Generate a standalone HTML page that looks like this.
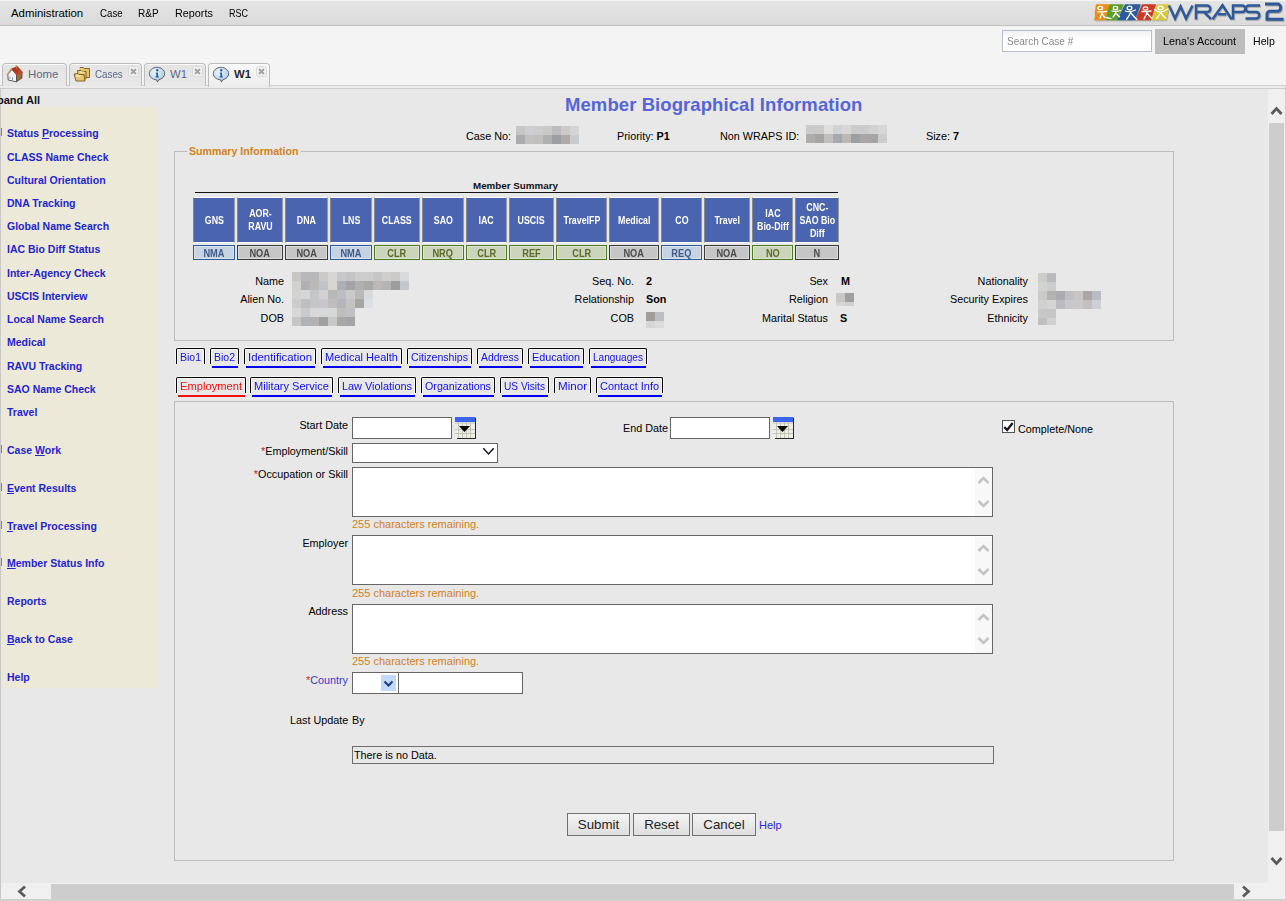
<!DOCTYPE html>
<html><head><meta charset="utf-8">
<style>
*{box-sizing:border-box}
html,body{margin:0;padding:0}
body{width:1286px;height:901px;overflow:hidden;position:relative;background:#f4f4f4;font-family:"Liberation Sans",sans-serif;font-size:11px;color:#1a1a1a}
.a{position:absolute;white-space:nowrap}
#menubar{left:0;top:0;width:1286px;height:26px;border-top:1px solid #f4f4f4;border-bottom:1px solid #bebebe;background:linear-gradient(#e4e4e4,#dbdbdb)}
.mi{top:7px;font-size:11.4px;color:#000}
.btab{top:63px;height:23px;border:1px solid #bdbdbd;box-shadow:inset 0 1px 0 #fff;border-bottom:none;border-radius:4px 4px 0 0;background:linear-gradient(#e4e4e4,#e8e8e8)}
.btab .t{position:absolute;top:4px;font-size:11.4px;color:#5b6886}
.cls{position:absolute;top:3px;width:11px;height:10px;border:1px solid #dcdcdc;border-radius:2px;background:#f4f4f4}
.lnk{font-size:10.5px;font-weight:bold;color:#2424d0;left:7px}
.lbl{font-size:10.8px;color:#000;text-align:right}
.val{font-size:10.8px;font-weight:bold;color:#000}
.hc{position:absolute;top:197px;height:46px;border-top:1px solid #fff;border-bottom:1px solid #fff;border-left:1px solid #8a8a8a;border-right:1px solid #9a9a9a;background:#4b64b0;color:#fff;font-weight:bold;font-size:10.5px;display:flex;align-items:center;justify-content:center;text-align:center;line-height:13px}
.sc{position:absolute;top:245px;height:15px;font-weight:bold;font-size:10.5px;text-align:center;line-height:12px}
.sb{background:#c5d3e3;border:1px solid #2e5c9a;color:#3e5a88;box-shadow:inset 0 0 0 1px #dbe3ee}
.sg{background:#c6c6c6;border:1px solid #3a3a3a;color:#4a4a4a;box-shadow:inset 0 0 0 1px #dcdcdc}
.sn{background:#cbd5bb;border:1px solid #4e7a1e;color:#5b6c2a;box-shadow:inset 0 0 0 1px #dee4d2}
.mz{position:absolute}
.mz i{position:absolute;width:9px;height:9px}
.tb{position:absolute;white-space:nowrap;height:16px;border:1px solid #000;border-bottom:none;border-radius:2px 2px 0 0;font-size:11px;color:#1010f0;box-shadow:inset 1px 1px 0 #f8f8f8,inset -1px 0 0 #f8f8f8,0 -1px 0 #f6f6f6,-1px 0 0 #f6f6f6,1px 0 0 #f6f6f6}
.tb span{position:absolute;left:3px;top:1.5px;transform-origin:0 0;display:inline-block;line-height:12px}
.ul{position:absolute;height:2px;background:#0000ee}
.inp{position:absolute;background:#fff;border:1px solid #666}
.orange{color:#d4801e;font-size:11px}
.btn{position:absolute;top:813px;height:23px;border:1px solid #707070;background:linear-gradient(#f4f4f4,#dedede);font-size:13.3px;color:#222;text-align:center;line-height:21px}
.hc span{display:inline-block;transform:scaleX(0.84)}
.sc span{display:inline-block;transform:scaleX(0.88);position:relative;top:0.5px}
</style></head><body>

<!-- menu bar -->
<div id="menubar" class="a"></div>
<div class="a mi" style="left:11px">Administration</div>
<div class="a mi" style="left:100px;transform:scaleX(0.85);transform-origin:0 0">Case</div>
<div class="a mi" style="left:138px;transform:scaleX(0.88);transform-origin:0 0">R&amp;P</div>
<div class="a mi" style="left:175px;transform:scaleX(0.95);transform-origin:0 0">Reports</div>
<div class="a mi" style="left:229px;transform:scaleX(0.79);transform-origin:0 0">RSC</div>

<!-- logo -->
<svg class="a" style="left:1092px;top:0" width="194" height="24" viewBox="0 0 194 24">
 <defs><filter id="sh" x="-5%" y="-10%" width="115%" height="140%"><feDropShadow dx="0.8" dy="0.9" stdDeviation="0.5" flood-color="#000" flood-opacity="0.3"/></filter></defs>
 <g filter="url(#sh)">
 <path d="M4 4.3 L17.5 4.3 Q19 8 16 11 L12.4 20.2 L2.2 20.2 Q3.5 16 2.8 12 Z" fill="#ea8f14"/>
 <path d="M17.7 4.3 L31.7 4.3 L25 20.2 L13 20.2 Z" fill="#5b9e26"/>
 <path d="M33 4.3 L48.8 4.3 L43 20.2 L25 20.2 Z" fill="#2b5b9c"/>
 <path d="M50 4.3 L64 4.3 L59 20.2 L43 20.2 Z" fill="#cc3b26"/>
 <path d="M65 4.3 L77.5 4.3 L74 20.2 L59 20.2 Z" fill="#d8c83c"/>
 </g>
 <g stroke="#fff" stroke-width="1.3" fill="none" stroke-linecap="round">
  <ellipse cx="8.3" cy="8" rx="2.3" ry="1.7"/><path d="M5.5 11.8 Q10 12 14.5 11.3 M10 12 Q9.5 15 8 18.2 M10 13.5 Q12 16 12.5 17.5"/>
  <ellipse cx="23.5" cy="8" rx="2.2" ry="1.7"/><path d="M20 10.8 Q24 12 28.5 10.5 M24 11.8 Q23 15 21 17 M24 13.5 Q26 15.5 27.5 16.8 M14 17.5 L19 18.7"/>
  <ellipse cx="37.5" cy="8" rx="2.4" ry="1.8"/><path d="M33.5 11 Q37 12.8 43.5 10 M39 12 Q37 16 34.5 19.5 M39.5 13.5 Q42 17 45 19.5"/>
  <ellipse cx="53.5" cy="8.5" rx="2.2" ry="1.6"/><path d="M50 11.5 Q54 12 59 11 M55 12 Q54 15.5 52 19 M55 13 Q57.5 16 60 18.5"/>
  <ellipse cx="68.5" cy="8" rx="2.5" ry="1.8"/><path d="M62.5 9.5 Q66 12 68 12 Q71 12 76 9 M68.5 12 Q68 15 64.5 18.5 M68.5 12.5 Q71 16 73.5 18"/>
 </g>
 <g stroke="#2f5896" stroke-width="2.5" fill="none" filter="url(#sh)">
  <path d="M77 5.5 L83 18.5 L88.5 6.5 L94 18.5 L100.5 5.5"/>
  <path d="M104 19.6 V5.5 H115 A3.3 3.3 0 0 1 115 12.1 H104 M112 12.1 L119 19"/>
  <path d="M120.5 19.2 L130.5 5.3 L139.5 19.2 M126 14.3 H134"/>
  <path d="M141 19.6 V5.5 H150 A3.3 3.3 0 0 1 150 12.1 H141"/>
  <path d="M168 5.5 H157 A3.2 3.2 0 0 0 157 12 H164.5 A3.3 3.3 0 0 1 164.5 18.5 H153.5"/>
  <path d="M173 4 H186.5 A4.2 4.2 0 0 1 186.5 11.3 H178 A3 3 0 0 0 175 14.3 V19.2 H191.5" stroke-width="3"/>
 </g>
</svg>

<!-- search / account -->
<div class="a" style="left:1002px;top:30px;width:150px;height:22px;background:linear-gradient(#f2f2f2,#fff 40%);border:1px solid #b8bcd0"></div>
<div class="a" style="left:1007px;top:35px;font-size:11px;color:#8a8a8a;transform:scaleX(0.91);transform-origin:0 0">Search Case #</div>
<div class="a" style="left:1155px;top:29px;width:90px;height:25px;background:#bdbdbd"></div>
<div class="a" style="left:1163px;top:35px;font-size:11.4px;color:#000;transform:scaleX(0.95);transform-origin:0 0">Lena's Account</div>
<div class="a" style="left:1253px;top:35px;font-size:11.4px;color:#000;transform:scaleX(0.93);transform-origin:0 0">Help</div>

<!-- browser tabs -->
<div class="a" style="left:0;top:85px;width:1286px;height:1px;background:#d0d0d0"></div>
<div class="a" style="left:0;top:86px;width:1286px;height:2px;background:#ececec"></div>
<div class="a btab" style="left:2px;width:65px"><span class="t" style="left:25px">Home</span></div>
<div class="a btab" style="left:69px;width:73px"><span class="t" style="left:25px;transform:scaleX(0.86);transform-origin:0 0">Cases</span></div>
<div class="a btab" style="left:144px;width:62px"><span class="t" style="left:25px">W1</span></div>
<div class="a btab" style="left:208px;width:62px;height:24px;background:linear-gradient(#fbfbfb,#ececec)"><span class="t" style="left:25px;font-weight:bold;color:#2a2a2a">W1</span></div>
<!-- tab icons -->
<svg class="a" style="left:6px;top:65px" width="18" height="18" viewBox="0 0 18 18">
 <defs><linearGradient id="rf" x1="0" y1="0" x2="1" y2="1"><stop offset="0" stop-color="#9a2414"/><stop offset="1" stop-color="#d2543c"/></linearGradient></defs>
 <path d="M10.5 9.5 L16 7.2 L16 13 L10.5 16.8 Z" fill="#a8682a" stroke="#4a4a4a" stroke-width="0.8"/>
 <path d="M1.8 9.6 L6 4.6 L10.5 9.6 L10.5 16.8 L2.2 15 Z" fill="#f6f8fc" stroke="#4a4a4a" stroke-width="0.9"/>
 <path d="M5.3 3.6 L11.5 1.2 L17.2 7.4 L10.5 10.2 Z" fill="url(#rf)"/>
 <path d="M1 10.2 L5.6 3.8" stroke="#c49862" stroke-width="1.6"/>
 <rect x="9.6" y="0.6" width="1.6" height="3.6" fill="#b8703a"/>
 <path d="M4 11.5 V14 M6.5 12 V15" stroke="#8898b0" stroke-width="0.9"/>
</svg>
<svg class="a" style="left:73px;top:66px" width="18" height="16" viewBox="0 0 18 16">
 <path d="M7 1.5 L10.5 1.5 L11.5 2.5 L16.5 2.5 L16.5 11.5 L10 11.5 L7 10 Z" fill="#e2c268" stroke="#7a5a20" stroke-width="0.9"/>
 <path d="M4.5 4.5 L8 4.5 L9 5.5 L13 5.5 L13 13 L5 13 Z" fill="#e8c870" stroke="#7a5a20" stroke-width="0.9"/>
 <path d="M1 8 L5 7.5 L6 8.5 L11 8.5 L12 15 L3 15 Z" fill="#e6c470" stroke="#7a5a20" stroke-width="0.9"/>
 <path d="M5 3 L9 3 M7 6 L11 6 M3 10 L8 10" stroke="#fff6c8" stroke-width="1"/>
</svg>
<svg class="a" style="left:148px;top:66px" width="18" height="17" viewBox="0 0 18 17">
 <defs><radialGradient id="ig" cx="0.4" cy="0.35" r="0.7"><stop offset="0" stop-color="#f4f8fc"/><stop offset="1" stop-color="#a8c4dc"/></radialGradient></defs>
 <path d="M9 1.3 C13.3 1.3 16.7 4.2 16.7 7.6 C16.7 10.8 13.8 13.2 10.8 13.7 L9.5 16 L8.6 13.8 C4.5 13.6 1.3 10.9 1.3 7.6 C1.3 4.2 4.7 1.3 9 1.3 Z" fill="url(#ig)" stroke="#4a5a6a" stroke-width="0.9"/>
 <circle cx="9.2" cy="4.3" r="1.2" fill="#1a64b0"/>
 <path d="M7.6 6.6 L10.1 6.6 L10.1 10.6 L11 10.6 L11 11.6 L7.4 11.6 L7.4 10.6 L8.3 10.6 L8.3 7.6 L7.6 7.6 Z" fill="#1a64b0"/>
</svg>
<svg class="a" style="left:212px;top:66px" width="18" height="17" viewBox="0 0 18 17">
 <path d="M9 1.3 C13.3 1.3 16.7 4.2 16.7 7.6 C16.7 10.8 13.8 13.2 10.8 13.7 L9.5 16 L8.6 13.8 C4.5 13.6 1.3 10.9 1.3 7.6 C1.3 4.2 4.7 1.3 9 1.3 Z" fill="url(#ig)" stroke="#4a5a6a" stroke-width="0.9"/>
 <circle cx="9.2" cy="4.3" r="1.2" fill="#1a64b0"/>
 <path d="M7.6 6.6 L10.1 6.6 L10.1 10.6 L11 10.6 L11 11.6 L7.4 11.6 L7.4 10.6 L8.3 10.6 L8.3 7.6 L7.6 7.6 Z" fill="#1a64b0"/>
</svg>
<svg class="a" style="left:128px;top:66px" width="11" height="11" viewBox="0 0 11 11"><rect x="0.5" y="0.5" width="10" height="10" rx="2" fill="#f2f2f2" stroke="#d8d8d8"/><path d="M3 3 L8 8 M8 3 L3 8" stroke="#a2a2a2" stroke-width="1.9"/></svg>
<svg class="a" style="left:192px;top:66px" width="11" height="11" viewBox="0 0 11 11"><rect x="0.5" y="0.5" width="10" height="10" rx="2" fill="#f2f2f2" stroke="#d8d8d8"/><path d="M3 3 L8 8 M8 3 L3 8" stroke="#a2a2a2" stroke-width="1.9"/></svg>
<svg class="a" style="left:256px;top:66px" width="11" height="11" viewBox="0 0 11 11"><rect x="0.5" y="0.5" width="10" height="10" rx="2" fill="#f2f2f2" stroke="#d8d8d8"/><path d="M3 3 L8 8 M8 3 L3 8" stroke="#a2a2a2" stroke-width="1.9"/></svg>
<!-- content frame -->
<div class="a" style="left:0;top:88px;width:1286px;height:795px;background:#e8e8e8;border-left:1px solid #c8c8c8;border-top:1px solid #cdcdcd"></div>
<div class="a" style="left:1px;top:107px;width:156px;height:581px;background:#ece9d8"></div>
<div class="a" style="right:1246px;top:94px;font-size:11px;font-weight:bold;color:#111">Expand All</div>

<!-- sidebar links -->
<div class="a lnk" style="top:127px">Status <u>P</u>rocessing</div>
<div class="a lnk" style="top:151px">CLASS Name Check</div>
<div class="a lnk" style="top:174px">Cultural Orientation</div>
<div class="a lnk" style="top:197px">DNA Tracking</div>
<div class="a lnk" style="top:220px">Global Name Search</div>
<div class="a lnk" style="top:243px">IAC Bio Diff Status</div>
<div class="a lnk" style="top:267px">Inter-Agency Check</div>
<div class="a lnk" style="top:290px">USCIS Interview</div>
<div class="a lnk" style="top:313px">Local Name Search</div>
<div class="a lnk" style="top:336px">Medical</div>
<div class="a lnk" style="top:360px">RAVU Tracking</div>
<div class="a lnk" style="top:383px">SAO Name Check</div>
<div class="a lnk" style="top:406px">Travel</div>
<div class="a lnk" style="top:444px">Case <u>W</u>ork</div>
<div class="a lnk" style="top:482px"><u>E</u>vent Results</div>
<div class="a lnk" style="top:520px"><u>T</u>ravel Processing</div>
<div class="a lnk" style="top:557px"><u>M</u>ember Status Info</div>
<div class="a lnk" style="top:595px">Reports</div>
<div class="a lnk" style="top:633px"><u>B</u>ack to Case</div>
<div class="a lnk" style="top:671px">Help</div>
<div class="a" style="left:1px;top:128px;width:1px;height:8px;background:#5a8ad0"></div>
<div class="a" style="left:1px;top:445px;width:1px;height:8px;background:#5a8ad0"></div>
<div class="a" style="left:1px;top:483px;width:1px;height:8px;background:#5a8ad0"></div>
<div class="a" style="left:1px;top:521px;width:1px;height:8px;background:#5a8ad0"></div>
<div class="a" style="left:1px;top:558px;width:1px;height:8px;background:#5a8ad0"></div>

<!-- title -->
<div class="a" style="left:565px;top:94px;font-size:18.5px;font-weight:bold;color:#5565d8;letter-spacing:0.08px">Member Biographical Information</div>
<div class="a lbl" style="left:466px;top:130px;text-align:left">Case No:</div>
<div class="a lbl" style="left:617px;top:130px;text-align:left">Priority: <b>P1</b></div>
<div class="a lbl" style="left:720px;top:130px;text-align:left">Non WRAPS ID:</div>
<div class="a lbl" style="left:926px;top:130px;text-align:left">Size: <b>7</b></div>

<!-- fieldset -->
<div class="a" style="left:174px;top:151px;width:1000px;height:190px;border:1px solid #bcbcbc"></div>
<div class="a" style="left:187px;top:145px;padding:0 2px;background:#e8e8e8;font-size:10.6px;font-weight:bold;color:#d4821a">Summary Information</div>
<div class="a" style="left:473px;top:180px;font-size:9.8px;font-weight:bold;color:#111">Member Summary</div>
<div class="a" style="left:195px;top:192px;width:643px;height:1px;background:#111"></div>
<div class="hc" style="left:193px;width:42px"><span>GNS</span></div><div class="sc sb" style="left:193px;width:42px"><span>NMA</span></div>
<div class="hc" style="left:237px;width:46px"><span>AOR-<br>RAVU</span></div><div class="sc sg" style="left:237px;width:46px"><span>NOA</span></div>
<div class="hc" style="left:285px;width:43px"><span>DNA</span></div><div class="sc sg" style="left:285px;width:43px"><span>NOA</span></div>
<div class="hc" style="left:330px;width:42px"><span>LNS</span></div><div class="sc sb" style="left:330px;width:42px"><span>NMA</span></div>
<div class="hc" style="left:374px;width:46px"><span>CLASS</span></div><div class="sc sn" style="left:374px;width:46px"><span>CLR</span></div>
<div class="hc" style="left:422px;width:42px"><span>SAO</span></div><div class="sc sn" style="left:422px;width:42px"><span>NRQ</span></div>
<div class="hc" style="left:466px;width:41px"><span>IAC</span></div><div class="sc sn" style="left:466px;width:41px"><span>CLR</span></div>
<div class="hc" style="left:509px;width:45px"><span>USCIS</span></div><div class="sc sn" style="left:509px;width:45px"><span>REF</span></div>
<div class="hc" style="left:556px;width:51px"><span>TravelFP</span></div><div class="sc sn" style="left:556px;width:51px"><span>CLR</span></div>
<div class="hc" style="left:609px;width:50px"><span>Medical</span></div><div class="sc sg" style="left:609px;width:50px"><span>NOA</span></div>
<div class="hc" style="left:661px;width:41px"><span>CO</span></div><div class="sc sb" style="left:661px;width:41px"><span>REQ</span></div>
<div class="hc" style="left:704px;width:46px"><span>Travel</span></div><div class="sc sg" style="left:704px;width:46px"><span>NOA</span></div>
<div class="hc" style="left:752px;width:41px"><span>IAC<br>Bio-Diff</span></div><div class="sc sn" style="left:752px;width:41px"><span>NO</span></div>
<div class="hc" style="left:795px;width:44px"><span>CNC-<br>SAO&nbsp;Bio<br>Diff</span></div><div class="sc sg" style="left:795px;width:44px"><span>N</span></div>

<!-- mosaics -->
<div class="mz" style="left:516px;top:126px"><i style="left:0px;top:0px;height:9px;background:#c8c6c4"></i><i style="left:9px;top:0px;height:9px;background:#ccced2"></i><i style="left:18px;top:0px;height:9px;background:#cccccc"></i><i style="left:27px;top:0px;height:9px;background:#c8c8c6"></i><i style="left:36px;top:0px;height:9px;background:#bcbcbe"></i><i style="left:45px;top:0px;height:9px;background:#cccac8"></i><i style="left:54px;top:0px;height:9px;background:#d2d4d6"></i><i style="left:0px;top:9px;height:9px;background:#acacae"></i><i style="left:9px;top:9px;height:9px;background:#c2c0c0"></i><i style="left:18px;top:9px;height:9px;background:#c0bfbe"></i><i style="left:27px;top:9px;height:9px;background:#b0b0b0"></i><i style="left:36px;top:9px;height:9px;background:#9c9ea2"></i><i style="left:45px;top:9px;height:9px;background:#aeaaa8"></i><i style="left:54px;top:9px;height:9px;background:#c8ccd0"></i></div>
<div class="mz" style="left:806px;top:125px"><i style="left:0px;top:0px;height:9px;background:#cacaca"></i><i style="left:9px;top:0px;height:9px;background:#cacaca"></i><i style="left:18px;top:0px;height:9px;background:#e0dfdd"></i><i style="left:27px;top:0px;height:9px;background:#d0d2d6"></i><i style="left:36px;top:0px;height:9px;background:#d8d7d5"></i><i style="left:45px;top:0px;height:9px;background:#cccccc"></i><i style="left:54px;top:0px;height:9px;background:#cbcbcd"></i><i style="left:63px;top:0px;height:9px;background:#d2d1cf"></i><i style="left:72px;top:0px;height:9px;background:#d6d8d8"></i><i style="left:0px;top:9px;height:9px;background:#aeadac"></i><i style="left:9px;top:9px;height:9px;background:#a7a3a0"></i><i style="left:18px;top:9px;height:9px;background:#c0bfbe"></i><i style="left:27px;top:9px;height:9px;background:#a4a8b0"></i><i style="left:36px;top:9px;height:9px;background:#bcb8b2"></i><i style="left:45px;top:9px;height:9px;background:#9ca0a4"></i><i style="left:54px;top:9px;height:9px;background:#a8a6a6"></i><i style="left:63px;top:9px;height:9px;background:#a4a6a6"></i><i style="left:72px;top:9px;height:9px;background:#cccccc"></i></div>
<div class="mz" style="left:292px;top:272px"><i style="left:0px;top:0px;height:9px;background:#c8c6c2"></i><i style="left:9px;top:0px;height:9px;background:#b8b8ba"></i><i style="left:18px;top:0px;height:9px;background:#b8b8ba"></i><i style="left:27px;top:0px;height:9px;background:#cacaca"></i><i style="left:36px;top:0px;height:9px;background:#d8d6d4"></i><i style="left:45px;top:0px;height:9px;background:#c6c8cc"></i><i style="left:54px;top:0px;height:9px;background:#c4c4c6"></i><i style="left:63px;top:0px;height:9px;background:#cccccc"></i><i style="left:72px;top:0px;height:9px;background:#cccccc"></i><i style="left:81px;top:0px;height:9px;background:#c6c6c6"></i><i style="left:90px;top:0px;height:9px;background:#d0cecc"></i><i style="left:99px;top:0px;height:9px;background:#cacaca"></i><i style="left:108px;top:0px;height:9px;background:#d8dadc"></i><i style="left:0px;top:9px;height:9px;background:#d0d0ce"></i><i style="left:9px;top:9px;height:9px;background:#b0b0b2"></i><i style="left:18px;top:9px;height:9px;background:#bcbab8"></i><i style="left:27px;top:9px;height:9px;background:#c0c4c8"></i><i style="left:36px;top:9px;height:9px;background:#d8d4d0"></i><i style="left:45px;top:9px;height:9px;background:#acb0b4"></i><i style="left:54px;top:9px;height:9px;background:#a4a4a8"></i><i style="left:63px;top:9px;height:9px;background:#b0b0b0"></i><i style="left:72px;top:9px;height:9px;background:#a8aaaa"></i><i style="left:81px;top:9px;height:9px;background:#bcb8b6"></i><i style="left:90px;top:9px;height:9px;background:#b4b4b4"></i><i style="left:99px;top:9px;height:9px;background:#9c9e9e"></i><i style="left:108px;top:9px;height:9px;background:#c4c8cc"></i><i style="left:0px;top:18px;height:9px;background:#d4d2d0"></i><i style="left:9px;top:18px;height:9px;background:#d4d6d8"></i><i style="left:18px;top:18px;height:9px;background:#c4c6c8"></i><i style="left:27px;top:18px;height:9px;background:#d2d0d2"></i><i style="left:36px;top:18px;height:9px;background:#b8b8b8"></i><i style="left:45px;top:18px;height:9px;background:#bcbec2"></i><i style="left:54px;top:18px;height:9px;background:#cacac8"></i><i style="left:63px;top:18px;height:9px;background:#bcbab8"></i><i style="left:72px;top:18px;height:9px;background:#d8dadc"></i><i style="left:0px;top:27px;height:9px;background:#cccccc"></i><i style="left:9px;top:27px;height:9px;background:#c0bec0"></i><i style="left:18px;top:27px;height:9px;background:#c4c6c8"></i><i style="left:27px;top:27px;height:9px;background:#c8c6ca"></i><i style="left:36px;top:27px;height:9px;background:#c0bebc"></i><i style="left:45px;top:27px;height:9px;background:#b4b6ba"></i><i style="left:54px;top:27px;height:9px;background:#c6c4c2"></i><i style="left:63px;top:27px;height:9px;background:#a8a6a4"></i><i style="left:72px;top:27px;height:9px;background:#dce0e4"></i><i style="left:0px;top:36px;height:9px;background:#d8d6d6"></i><i style="left:9px;top:36px;height:9px;background:#c8cacc"></i><i style="left:18px;top:36px;height:9px;background:#d8d8d8"></i><i style="left:27px;top:36px;height:9px;background:#d8d8d8"></i><i style="left:36px;top:36px;height:9px;background:#d6d8d8"></i><i style="left:45px;top:36px;height:9px;background:#c0bebc"></i><i style="left:54px;top:36px;height:9px;background:#c0c0c2"></i><i style="left:0px;top:45px;height:9px;background:#c8c6c4"></i><i style="left:9px;top:45px;height:9px;background:#b0b4b8"></i><i style="left:18px;top:45px;height:9px;background:#b4b2b0"></i><i style="left:27px;top:45px;height:9px;background:#9ea0a2"></i><i style="left:36px;top:45px;height:9px;background:#c8c8c8"></i><i style="left:45px;top:45px;height:9px;background:#aaa8a6"></i><i style="left:54px;top:45px;height:9px;background:#a4a4a8"></i></div>
<div class="mz" style="left:646px;top:312px"><i style="left:0px;top:0px;height:9px;background:#a09c9a"></i><i style="left:9px;top:0px;height:9px;background:#bcbec2"></i><i style="left:0px;top:9px;height:7px;background:#d6d6d6"></i><i style="left:9px;top:9px;height:7px;background:#dcdcdc"></i></div>
<div class="mz" style="left:836px;top:293px"><i style="left:0px;top:0px;height:9px;background:#c8c6c4"></i><i style="left:9px;top:0px;height:9px;background:#a0a0a0"></i><i style="left:0px;top:9px;height:4px;background:#d8d6d4"></i><i style="left:9px;top:9px;height:4px;background:#cdd0d4"></i></div>
<div class="mz" style="left:1038px;top:273px"><i style="left:0px;top:0px;height:9px;background:#cdcdca"></i><i style="left:9px;top:0px;height:9px;background:#b8babd"></i><i style="left:0px;top:9px;height:9px;background:#d2d2d0"></i><i style="left:9px;top:9px;height:9px;background:#cbcccc"></i><i style="left:0px;top:18px;height:9px;background:#cacac8"></i><i style="left:9px;top:18px;height:9px;background:#b4b2b2"></i><i style="left:18px;top:18px;height:9px;background:#acacae"></i><i style="left:27px;top:18px;height:9px;background:#c0c0c4"></i><i style="left:36px;top:18px;height:9px;background:#c8c6c4"></i><i style="left:45px;top:18px;height:9px;background:#aca6a4"></i><i style="left:54px;top:18px;height:9px;background:#b8bcc4"></i><i style="left:0px;top:27px;height:9px;background:#d0d0d0"></i><i style="left:9px;top:27px;height:9px;background:#d4d4d2"></i><i style="left:18px;top:27px;height:9px;background:#bcbcc0"></i><i style="left:27px;top:27px;height:9px;background:#c8c8cc"></i><i style="left:36px;top:27px;height:9px;background:#cac8c8"></i><i style="left:45px;top:27px;height:9px;background:#c4c0c0"></i><i style="left:54px;top:27px;height:9px;background:#cdd0d4"></i><i style="left:0px;top:36px;height:9px;background:#c8c8c8"></i><i style="left:9px;top:36px;height:9px;background:#c4c6c8"></i><i style="left:0px;top:45px;height:7px;background:#c0c0c0"></i><i style="left:9px;top:45px;height:7px;background:#d0d0d0"></i></div>

<!-- details -->
<div class="a lbl" style="right:1002px;top:275px">Name</div>
<div class="a lbl" style="right:1002px;top:293px">Alien No.</div>
<div class="a lbl" style="right:1002px;top:312px">DOB</div>
<div class="a lbl" style="right:652px;top:275px">Seq. No.</div>
<div class="a lbl" style="right:652px;top:293px">Relationship</div>
<div class="a lbl" style="right:652px;top:312px">COB</div>
<div class="a val" style="left:646px;top:275px">2</div>
<div class="a val" style="left:646px;top:293px">Son</div>
<div class="a lbl" style="right:458px;top:275px">Sex</div>
<div class="a lbl" style="right:458px;top:293px">Religion</div>
<div class="a lbl" style="right:458px;top:312px">Marital Status</div>
<div class="a val" style="left:841px;top:275px">M</div>
<div class="a val" style="left:840px;top:312px">S</div>
<div class="a lbl" style="right:258px;top:275px">Nationality</div>
<div class="a lbl" style="right:258px;top:293px">Security Expires</div>
<div class="a lbl" style="right:258px;top:312px">Ethnicity</div>

<!-- sub tabs -->
<div class="tb" style="left:176px;top:348px;width:29px"><span style="transform:scaleX(0.955)">Bio1</span></div>
<div class="tb" style="left:210px;top:348px;width:29px"><span style="transform:scaleX(0.955)">Bio2</span></div>
<div class="ul" style="left:212px;top:366px;width:26px"></div>
<div class="tb" style="left:244px;top:348px;width:72px"><span style="transform:scaleX(1.036)">Identification</span></div>
<div class="ul" style="left:246px;top:366px;width:69px"></div>
<div class="tb" style="left:321px;top:348px;width:81px"><span style="transform:scaleX(1.003)">Medical Health</span></div>
<div class="ul" style="left:323px;top:366px;width:78px"></div>
<div class="tb" style="left:407px;top:348px;width:65px"><span style="transform:scaleX(0.961)">Citizenships</span></div>
<div class="ul" style="left:409px;top:366px;width:62px"></div>
<div class="tb" style="left:477px;top:348px;width:46px"><span style="transform:scaleX(0.941)">Address</span></div>
<div class="ul" style="left:479px;top:366px;width:43px"></div>
<div class="tb" style="left:528px;top:348px;width:56px"><span style="transform:scaleX(0.982)">Education</span></div>
<div class="ul" style="left:530px;top:366px;width:53px"></div>
<div class="tb" style="left:589px;top:348px;width:58px"><span style="transform:scaleX(0.917)">Languages</span></div>
<div class="ul" style="left:591px;top:366px;width:55px"></div>
<div class="tb" style="left:176px;top:377px;width:70px;color:#f01010"><span style="transform:scaleX(1.015)">Employment</span></div>
<div class="ul" style="left:178px;top:395px;width:67px;background:#f01010"></div>
<div class="tb" style="left:250px;top:377px;width:83px"><span style="transform:scaleX(1.005)">Military Service</span></div>
<div class="ul" style="left:252px;top:395px;width:80px"></div>
<div class="tb" style="left:338px;top:377px;width:78px"><span style="transform:scaleX(0.990)">Law Violations</span></div>
<div class="ul" style="left:340px;top:395px;width:75px"></div>
<div class="tb" style="left:421px;top:377px;width:74px"><span style="transform:scaleX(0.972)">Organizations</span></div>
<div class="ul" style="left:423px;top:395px;width:71px"></div>
<div class="tb" style="left:500px;top:377px;width:49px"><span style="transform:scaleX(0.923)">US Visits</span></div>
<div class="ul" style="left:502px;top:395px;width:46px"></div>
<div class="tb" style="left:554px;top:377px;width:37px"><span style="transform:scaleX(1.055)">Minor</span></div>
<div class="tb" style="left:596px;top:377px;width:67px"><span style="transform:scaleX(0.995)">Contact Info</span></div>
<div class="ul" style="left:598px;top:395px;width:64px"></div>

<!-- form box -->
<div class="a" style="left:174px;top:401px;width:1000px;height:460px;border:1px solid #bcbcbc"></div>
<div class="a lbl" style="right:938px;top:419px">Start Date</div>
<div class="inp" style="left:352px;top:417px;width:100px;height:22px"></div>
<svg class="a" style="left:455px;top:417px" width="21" height="22" viewBox="0 0 21 22">
 <rect x="0" y="5" width="20.5" height="17" fill="#eeeee4"/>
 <rect x="0" y="0" width="20.5" height="5" fill="#3a64f2"/>
 <g stroke="#c4c4b8" stroke-width="1"><path d="M0 6H20M0 12.5H20M0 16.5H20M3.5 5V21M7.5 5V21M11.5 5V21M15.5 5V21"/></g>
 <path d="M20.5 1 V22 M2 21.5 H21" stroke="#2a2a2a" stroke-width="1"/>
 <path d="M4 9 L15 9 L9.5 15 Z" fill="#080808"/>
</svg>
<div class="a lbl" style="left:623px;top:422px;text-align:left">End Date</div>
<div class="inp" style="left:670px;top:417px;width:100px;height:22px"></div>
<svg class="a" style="left:773px;top:417px" width="21" height="22" viewBox="0 0 21 22">
 <rect x="0" y="5" width="20.5" height="17" fill="#eeeee4"/>
 <rect x="0" y="0" width="20.5" height="5" fill="#3a64f2"/>
 <g stroke="#c4c4b8" stroke-width="1"><path d="M0 6H20M0 12.5H20M0 16.5H20M3.5 5V21M7.5 5V21M11.5 5V21M15.5 5V21"/></g>
 <path d="M20.5 1 V22 M2 21.5 H21" stroke="#2a2a2a" stroke-width="1"/>
 <path d="M4 9 L15 9 L9.5 15 Z" fill="#080808"/>
</svg>
<svg class="a" style="left:1002px;top:420px" width="13" height="13" viewBox="0 0 13 13">
 <rect x="0.5" y="0.5" width="12" height="12" fill="#fff" stroke="#555"/>
 <path d="M2.3 7.2 L5.2 10 L10.6 3" stroke="#151525" stroke-width="2.3" fill="none"/>
</svg>
<div class="a lbl" style="left:1018px;top:423px;text-align:left">Complete/None</div>

<div class="a lbl" style="right:938px;top:445px"><span style="color:#c01818">*</span>Employment/Skill</div>
<div class="inp" style="left:352px;top:443px;width:146px;height:20px"></div>
<svg class="a" style="left:482px;top:446px" width="13" height="11" viewBox="0 0 13 11"><path d="M1.3 2.3 L6.5 8 L11.7 2.3" stroke="#151520" stroke-width="1.5" fill="none"/></svg>

<div class="a lbl" style="right:938px;top:468px"><span style="color:#c01818">*</span>Occupation or Skill</div>
<div class="inp" style="left:352px;top:467px;width:641px;height:50px"></div>
<div class="a orange" style="left:352px;top:518px">255 characters remaining.</div>
<div class="a lbl" style="right:938px;top:537px">Employer</div>
<div class="inp" style="left:352px;top:535px;width:641px;height:50px"></div>
<div class="a orange" style="left:352px;top:587px">255 characters remaining.</div>
<div class="a lbl" style="right:938px;top:605px">Address</div>
<div class="inp" style="left:352px;top:604px;width:641px;height:50px"></div>
<div class="a orange" style="left:352px;top:655px">255 characters remaining.</div>
<div class="a" style="left:975px;top:469px;width:17px;height:47px;background:#f8f8f8"></div>
<svg class="a" style="left:977px;top:475px" width="13" height="34" viewBox="0 0 13 34"><path d="M1.5 8 L6.5 3 L11.5 8 M1.5 26 L6.5 31 L11.5 26" stroke="#c4c4c4" stroke-width="2.6" fill="none"/></svg>
<div class="a" style="left:975px;top:537px;width:17px;height:47px;background:#f8f8f8"></div>
<svg class="a" style="left:977px;top:543px" width="13" height="34" viewBox="0 0 13 34"><path d="M1.5 8 L6.5 3 L11.5 8 M1.5 26 L6.5 31 L11.5 26" stroke="#c4c4c4" stroke-width="2.6" fill="none"/></svg>
<div class="a" style="left:975px;top:606px;width:17px;height:47px;background:#f8f8f8"></div>
<svg class="a" style="left:977px;top:612px" width="13" height="34" viewBox="0 0 13 34"><path d="M1.5 8 L6.5 3 L11.5 8 M1.5 26 L6.5 31 L11.5 26" stroke="#c4c4c4" stroke-width="2.6" fill="none"/></svg>

<div class="a lbl" style="right:938px;top:674px;color:#3a3ad0"><span style="color:#e01818">*</span>Country</div>
<div class="inp" style="left:352px;top:672px;width:47px;height:22px"></div>
<div class="a" style="left:381px;top:675px;width:15px;height:16px;background:#c3d9fb"></div>
<svg class="a" style="left:383px;top:680px" width="11" height="7" viewBox="0 0 11 7"><path d="M1.5 1.5 L5.5 5.5 L9.5 1.5" stroke="#1a3a8a" stroke-width="2" fill="none"/></svg>
<div class="inp" style="left:398px;top:672px;width:125px;height:22px"></div>

<div class="a lbl" style="left:290px;top:714px;text-align:left">Last Update</div>
<div class="a lbl" style="left:352px;top:714px;text-align:left">By</div>
<div class="a" style="left:352px;top:746px;width:642px;height:18px;border:1px solid #6e6e6e;background:#e8e8e8"></div>
<div class="a lbl" style="left:354px;top:749px;text-align:left">There is no Data.</div>

<div class="btn" style="left:567px;width:63px">Submit</div>
<div class="btn" style="left:633px;width:57px">Reset</div>
<div class="btn" style="left:692px;width:64px">Cancel</div>
<div class="a" style="left:759px;top:819px;font-size:11px;color:#2a2ad8">Help</div>

<!-- scrollbars -->
<div class="a" style="left:1268px;top:89px;width:17px;height:795px;background:#f0f0f0"></div>
<div class="a" style="left:1269px;top:123px;width:15px;height:708px;background:#cdcdcd"></div>
<svg class="a" style="left:1270px;top:105px" width="13" height="11" viewBox="0 0 13 11"><path d="M1.5 9 L6.5 3.5 L11.5 9" stroke="#5a5a5a" stroke-width="2.8" fill="none"/></svg>
<svg class="a" style="left:1270px;top:856px" width="13" height="11" viewBox="0 0 13 11"><path d="M1.5 2 L6.5 7.5 L11.5 2" stroke="#5a5a5a" stroke-width="2.8" fill="none"/></svg>
<div class="a" style="left:0;top:883px;width:1286px;height:18px;background:#f0f0f0;border-left:1px solid #c8c8c8;border-bottom:2px solid #d0d0d0"></div>
<div class="a" style="left:51px;top:884px;width:1183px;height:15px;background:#cdcdcd"></div>
<svg class="a" style="left:16px;top:885px" width="11" height="13" viewBox="0 0 11 13"><path d="M9 1.5 L3.5 6.5 L9 11.5" stroke="#5a5a5a" stroke-width="2.8" fill="none"/></svg>
<svg class="a" style="left:1241px;top:885px" width="11" height="13" viewBox="0 0 11 13"><path d="M2 1.5 L7.5 6.5 L2 11.5" stroke="#5a5a5a" stroke-width="2.8" fill="none"/></svg>

<div class="a" style="left:1285px;top:85px;width:1px;height:816px;background:#d0d0d0"></div>
</body></html>
